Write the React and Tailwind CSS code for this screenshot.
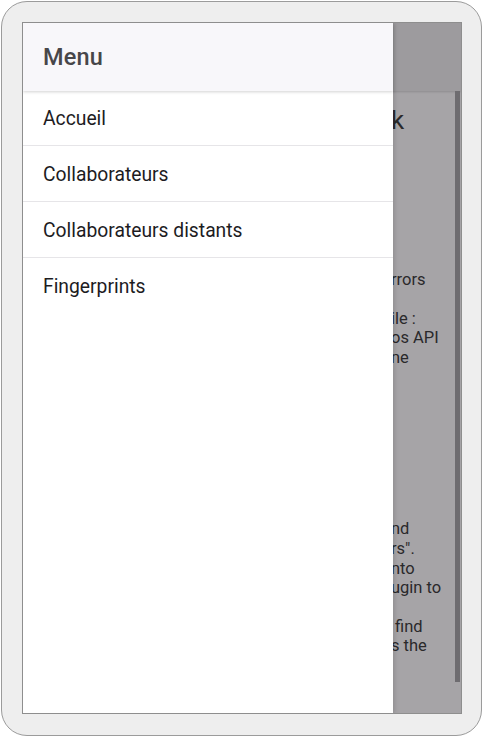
import { useState } from 'react';

const items = [
  'Accueil',
  'Collaborateurs',
  'Collaborateurs distants',
  'Fingerprints',
];

// lignes du contenu derrière le voile (seule la fin dépasse du tiroir)
const bodyLines = [
  { text: 'rrors', top: 'mt-[135px]' },
  { text: 'ile :', top: 'mt-[19px]' },
  { text: 'os API', top: '' },
  { text: 'ne', top: '' },
  { text: 'nd', top: 'mt-[152px]' },
  { text: 'rs".', top: '' },
  { text: 'nto', top: '' },
  { text: 'ugin to', top: '' },
  { text: ' find', top: 'mt-[19px]' },
  { text: 's the', top: '' },
];

export default function App() {
  const [active, setActive] = useState(null);

  return (
    <div className="w-[483px] h-[737px] bg-white p-[1px] font-['Roboto','Liberation_Sans',sans-serif]">
      <div className="w-[481px] h-[735px] rounded-[26px] border border-[#9b9b9b] bg-[#eeeeee] p-[20px]">
        <div className="relative w-[440px] h-[692px] border border-[#8e8e8e] overflow-hidden">
          {/* page en dessous, assombrie par le voile */}
          <div className="flex flex-col h-full bg-[#a6a4a7]">
            <div className="h-[68px] bg-[#9d9b9e] shadow-[0_1px_2px_rgba(0,0,0,0.15)]" />
            <div className="flex flex-1 min-h-0">
              <div className="flex-1 pl-[368px] text-[#2a292b]">
                <div className="mt-[14px] text-[26px] leading-[30px]">k</div>
                {bodyLines.map((l, i) => (
                  <div
                    key={i}
                    className={`text-[16.5px] leading-[19.6px] whitespace-pre ${l.top}`}
                  >
                    {l.text}
                  </div>
                ))}
              </div>
              <div className="w-[5px] h-[591px] bg-[#6e6c70] mr-[1px]" />
            </div>
          </div>

          {/* tiroir */}
          <div className="absolute left-0 top-0 bottom-0 w-[370px] bg-white shadow-[2px_0_4px_rgba(0,0,0,0.12)]">
            <div className="h-[68px] bg-[#f8f7fa] flex items-center px-[20px] shadow-[0_1px_3px_rgba(0,0,0,0.18)] relative">
              <h1 className="text-[23.5px] font-medium text-[#474649] tracking-[0.2px] translate-y-[1px]">
                Menu
              </h1>
            </div>
            <ul>
              {items.map((label, i) => (
                <li
                  key={label}
                  onClick={() => setActive(i)}
                  className={`flex items-center px-[20px] pt-[3px] text-[19.3px] text-[#1d1c1f] ${
                    i === 0 ? 'h-[55px]' : 'h-[56px]'
                  } ${
                    i < items.length - 1 ? 'border-b border-[#e6e5e8]' : ''
                  } ${active === i ? 'bg-[#f3f2f5]' : ''}`}
                >
                  {label}
                </li>
              ))}
            </ul>
          </div>
        </div>
      </div>
    </div>
  );
}
